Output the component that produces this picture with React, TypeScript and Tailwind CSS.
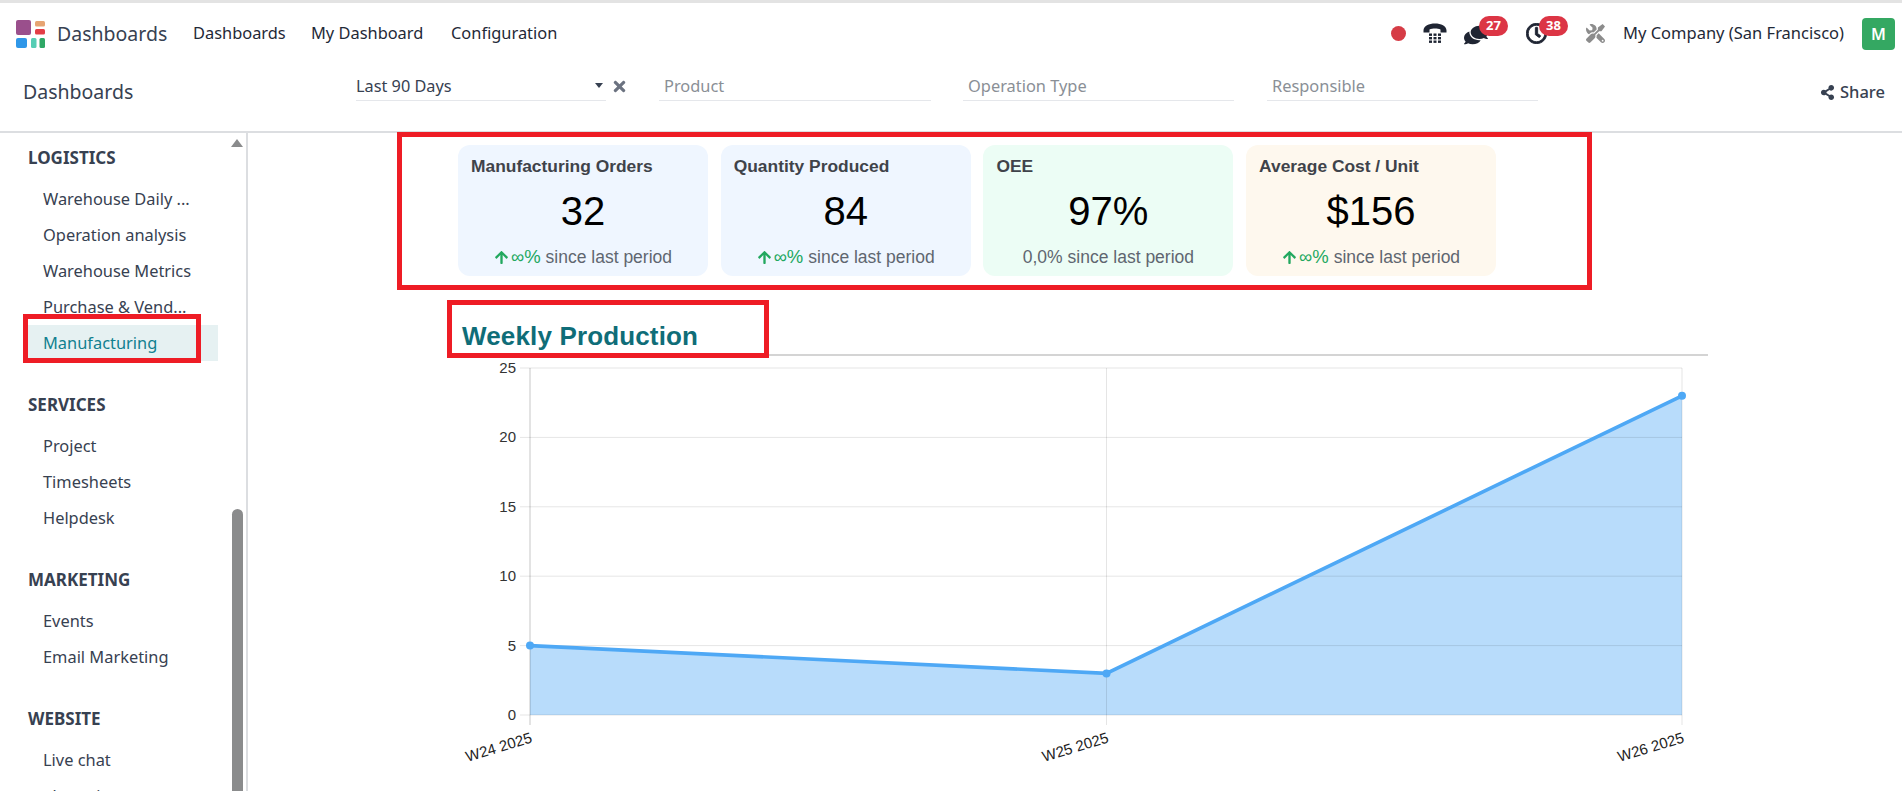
import { FaArrowUp, FaComments, FaRegClock, FaShareAlt, FaTimes, FaTools } from "react-icons/fa";

const NOTO = "font-['Noto_Sans','Open_Sans',sans-serif]";

function Logo() {
  return (
    <svg width="32" height="30" viewBox="0 0 32 30" className="shrink-0">
      <rect x="1" y="1" width="15" height="15" rx="2" fill="#9a4f8c" />
      <rect x="20" y="2" width="10" height="5.5" rx="1.5" fill="#e6a472" />
      <rect x="20" y="10" width="10" height="5.5" rx="1.5" fill="#e33e46" />
      <rect x="1" y="19" width="11" height="10" rx="2" fill="#2f97e8" />
      <rect x="16" y="19" width="5.5" height="10" rx="1.5" fill="#56cdb4" />
      <rect x="24.5" y="19" width="5.5" height="10" rx="1.5" fill="#2fa866" />
    </svg>
  );
}

function PhoneIcon() {
  return (
    <svg width="24" height="21" viewBox="0 0 24 21" className="shrink-0">
      <path
        d="M0.5 7.5C0.5 3 6 0.5 12 0.5S23.5 3 23.5 7.5V9.5H17.5V6.5C16 5.8 14 5.5 12 5.5S8 5.8 6.5 6.5V9.5H0.5Z"
        fill="#1f2533"
      />
      <g fill="#1f2533">
        <rect x="6" y="10.5" width="3" height="2.4" />
        <rect x="10.5" y="10.5" width="3" height="2.4" />
        <rect x="15" y="10.5" width="3" height="2.4" />
        <rect x="6" y="14" width="3" height="2.4" />
        <rect x="10.5" y="14" width="3" height="2.4" />
        <rect x="15" y="14" width="3" height="2.4" />
        <rect x="6" y="17.5" width="3" height="2.4" />
        <rect x="10.5" y="17.5" width="3" height="2.4" />
        <rect x="15" y="17.5" width="3" height="2.4" />
      </g>
    </svg>
  );
}

function Navbar() {
  return (
    <div className={`flex h-[61px] shrink-0 items-center ${NOTO} text-[16.4px] text-[#1f2937]`}>
      <div className="ml-[15px]">
        <Logo />
      </div>
      <span className="ml-[10px] w-[136px] text-[19.5px] text-[#374151]">Dashboards</span>
      <span className="w-[118px]">Dashboards</span>
      <span className="w-[140px]">My Dashboard</span>
      <span>Configuration</span>
      <div className="ml-auto flex items-center">
        <span className="h-[15px] w-[15px] rounded-full bg-[#d63c46]" />
        <span className="ml-[17px]">
          <PhoneIcon />
        </span>
        <span className="relative ml-[17px] block h-[21px] w-[23px] text-[#1f2533]">
          <FaComments size={24} className="-scale-x-100" />
          <span className="absolute top-[-7px] left-[15px] flex h-[20px] w-[29px] items-center justify-center rounded-full bg-[#dc3545] text-[13px] font-bold text-white">
            27
          </span>
        </span>
        <span className="relative ml-[39px] block h-[21px] w-[21px] text-[#1f2533]">
          <FaRegClock size={21} stroke="currentColor" strokeWidth={22} />
          <span className="absolute top-[-7px] left-[13px] flex h-[20px] w-[29px] items-center justify-center rounded-full bg-[#dc3545] text-[13px] font-bold text-white">
            38
          </span>
        </span>
        <span className="ml-[39px] text-[#8c8c8c]">
          <FaTools size={19} className="-scale-x-100" />
        </span>
        <span className="ml-[18px] w-[221px] text-[16.5px] whitespace-nowrap">My Company (San Francisco)</span>
        <span className="mr-[7px] ml-[18px] flex h-[32px] w-[33px] items-center justify-center rounded-[4px] bg-[#34a862] text-[16px] font-semibold text-white">
          M
        </span>
      </div>
    </div>
  );
}

function FilterField({ label, className }: { label: string; className: string }) {
  return (
    <div className={`mt-[9px] flex h-[28px] items-center border-b border-[#e5e7eb] pl-[5px] text-[16.4px] text-[#8a8f96] ${className}`}>
      {label}
    </div>
  );
}

function SubHeader() {
  return (
    <div className={`flex h-[69px] shrink-0 border-b-2 border-[#dcdee1] ${NOTO}`}>
      <span className="mt-[14px] ml-[23px] w-[333px] text-[19.5px] leading-[28px] text-[#374151]">Dashboards</span>
      <div className="mt-[9px] flex h-[28px] w-[250px] items-center border-b border-[#e5e7eb] text-[16.3px] text-[#374151]">
        <span>Last 90 Days</span>
        <span className="mt-[-3px] mr-[3px] ml-auto h-0 w-0 border-x-[4.5px] border-t-[5px] border-x-transparent border-t-[#374151]" />
      </div>
      <span className="mt-[14px] ml-[5px] h-[17px] text-[#6b7280]">
        <FaTimes size={17} />
      </span>
      <FilterField label="Product" className="ml-[31px] w-[272px]" />
      <FilterField label="Operation Type" className="ml-[32px] w-[271px]" />
      <FilterField label="Responsible" className="ml-[33px] w-[271px]" />
      <div className="mt-[14px] mr-[17px] ml-auto flex h-[28px] items-center gap-[5px] text-[16.5px] font-medium text-[#374151]">
        <FaShareAlt size={15} />
        <span>Share</span>
      </div>
    </div>
  );
}

const GROUPS = [
  { title: "LOGISTICS", items: ["Warehouse Daily ...", "Operation analysis", "Warehouse Metrics", "Purchase & Vend...", "Manufacturing"] },
  { title: "SERVICES", items: ["Project", "Timesheets", "Helpdesk"] },
  { title: "MARKETING", items: ["Events", "Email Marketing"] },
  { title: "WEBSITE", items: ["Live chat", "eLearning"] },
];

function Sidebar() {
  return (
    <aside className={`relative h-full w-[248px] shrink-0 overflow-hidden border-r-2 border-[#dcdee1] pt-[13px] ${NOTO}`}>
      {GROUPS.map((g) => (
        <div key={g.title} className="mb-[32px]">
          <div className="mb-[11px] ml-[28px] text-[17px] leading-[24px] font-bold text-[#374151]">{g.title}</div>
          {g.items.map((it) =>
            it === "Manufacturing" ? (
              <div key={it} className="relative ml-[28px] flex h-[36px] w-[190px] items-center bg-[#e6f1f2] pl-[15px] text-[16.4px] text-[#11808f]">
                {it}
                <span className="absolute top-[-11px] left-[-5px] h-[49px] w-[178px] border-[5px] border-[#ee1c25]" />
              </div>
            ) : (
              <div key={it} className="ml-[28px] flex h-[36px] items-center pl-[15px] text-[16.4px] text-[#374151]">
                {it}
              </div>
            ),
          )}
        </div>
      ))}
      <span className="absolute top-[6px] left-[231px] h-0 w-0 border-x-[6.5px] border-b-[8px] border-x-transparent border-b-[#8a8b8c]" />
      <span className="absolute top-[376px] left-[232px] h-[500px] w-[11px] rounded-t-full bg-[#8a8b8c]" />
    </aside>
  );
}

function Trend() {
  return (
    <span className="inline-flex items-center text-[18.5px] text-[#22a85f]">
      <FaArrowUp size={15} className="mr-[2px]" />
      <span>∞%</span>
    </span>
  );
}

function Card({ title, value, bg, up, flat }: { title: string; value: string; bg: string; up?: boolean; flat?: string }) {
  return (
    <div className={`h-[131px] w-[250px] shrink-0 rounded-[12px] pt-[8px] ${bg}`}>
      <div className="mt-[1px] pl-[13px] text-[17.4px] leading-[24px] font-bold text-[#3f434a]">{title}</div>
      <div className="mt-[9px] text-center text-[40px] leading-[48px] text-black">{value}</div>
      <div className="mt-[10px] flex h-[24px] items-center justify-center gap-[5px] text-[17.5px] leading-[24px] text-[#5f6670]">
        {up ? <Trend /> : <span>{flat}</span>}
        <span>since last period</span>
      </div>
    </div>
  );
}

function Chart() {
  const yTicks = [
    { l: "25", y: 12 },
    { l: "20", y: 81.4 },
    { l: "15", y: 150.8 },
    { l: "10", y: 220.2 },
    { l: "5", y: 289.6 },
    { l: "0", y: 359 },
  ];
  const xs = [50, 626.5, 1202];
  const line = `${xs[0]},289.6 ${xs[1]},317.4 ${xs[2]},39.8`;
  return (
    <svg width="1270" height="435" viewBox="-30 0 1270 435" className="ml-[202px] block font-['Liberation_Sans',Arial,sans-serif]">
      <polygon points={`${xs[0]},359 ${line} ${xs[2]},359`} fill="#4ea8f5" fillOpacity="0.4" />
      {yTicks.map((t) => (
        <g key={t.l}>
          <line x1="40" x2="1202" y1={t.y} y2={t.y} stroke="#000" strokeOpacity="0.1" />
          <text x="36" y={t.y + 5} textAnchor="end" fontSize="15" fill="#333">{t.l}</text>
        </g>
      ))}
      {xs.map((x, i) => (
        <g key={x}>
          <line x1={x} x2={x} y1="12" y2="369" stroke="#000" strokeOpacity={i === 0 ? 0.22 : 0.1} />
          <text
            transform={`translate(${x + 3} 386) rotate(-17)`}
            textAnchor="end"
            fontSize="15"
            fill="#222"
          >
            {`W${24 + i} 2025`}
          </text>
        </g>
      ))}
      <polyline points={line} fill="none" stroke="#4ea8f5" strokeWidth="3.6" />
      <circle cx={xs[0]} cy="289.6" r="4" fill="#4ea8f5" />
      <circle cx={xs[1]} cy="317.4" r="4" fill="#4ea8f5" />
      <circle cx={xs[2]} cy="39.8" r="4" fill="#4ea8f5" />
    </svg>
  );
}

export default function App() {
  return (
    <div className="flex h-[791px] w-[1902px] flex-col overflow-hidden bg-white font-['Liberation_Sans',Arial,sans-serif]">
      <div className="h-[3px] shrink-0 bg-[#e3e3e3]" />
      <Navbar />
      <SubHeader />
      <div className="flex min-h-0 flex-1">
        <Sidebar />
        <main className="min-w-0 flex-1">
          <div className="mt-[-1px] ml-[149px] flex h-[158px] w-[1195px] gap-[12.7px] border-[5px] border-[#ee1c25] pt-[8px] pl-[56px]">
            <Card title="Manufacturing Orders" value="32" bg="bg-[#eff6ff]" up />
            <Card title="Quantity Produced" value="84" bg="bg-[#eff6ff]" up />
            <Card title="OEE" value="97%" bg="bg-[#ecfdf5]" flat="0,0%" />
            <Card title="Average Cost / Unit" value="$156" bg="bg-[#fef8ee]" up />
          </div>
          <div className="mt-[10px] ml-[199px] h-[56px] w-[1261px] border-b-2 border-[#d4d4d4]">
            <div className="h-[58px] w-[322px] border-[5px] border-[#ee1c25] pt-[15px] pl-[10px] text-[26px] leading-[32px] font-bold tracking-[0.15px] text-[#0f6d78]">
              Weekly Production
            </div>
          </div>
          <Chart />
        </main>
      </div>
    </div>
  );
}
